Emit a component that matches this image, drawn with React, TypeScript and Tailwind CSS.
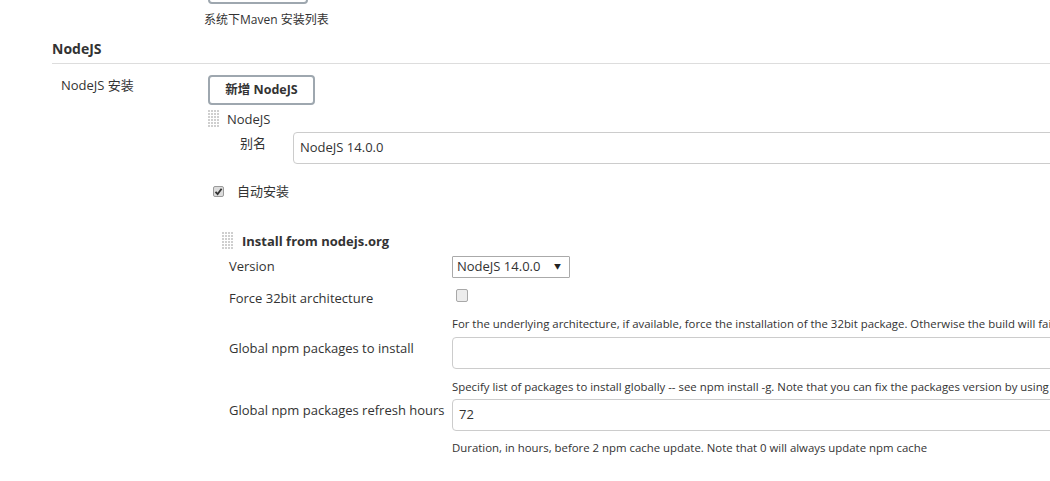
import React from 'react';

const FONT = "font-['Open_Sans','Noto_Sans_CJK_SC',sans-serif]";

function Handle() {
  const dots: React.ReactNode[] = [];
  for (let r = 0; r < 6; r++) {
    for (let c = 0; c < 4; c++) {
      dots.push(<rect key={`${r}-${c}`} x={c * 3} y={r * 3} width={2} height={2} fill="#cfcfcf" />);
    }
  }
  return (
    <svg width="11" height="18" viewBox="0 0 11 18" className="shrink-0">
      {dots}
    </svg>
  );
}

function Checkbox({ checked }: { checked?: boolean }) {
  return (
    <div
      className={
        checked
          ? 'w-[11px] h-[11px] rounded-[2px] border border-[#9a9a9a] bg-[#dcdcdc] flex items-center justify-center shrink-0'
          : 'w-[12px] h-[13px] rounded-[2px] border border-[#a8a8a8] bg-[#ececec] shrink-0'
      }
    >
      {checked && (
        <svg width="9" height="9" viewBox="0 0 9 9">
          <path d="M1.5 4.8 L3.6 7 L7.6 1.8" stroke="#333" strokeWidth="1.8" fill="none" />
        </svg>
      )}
    </div>
  );
}

function TextInput({ value, width }: { value?: string; width: string }) {
  return (
    <div className={`${width} h-[32px] border border-[#cccccc] rounded-[4px] px-[6px] flex items-center text-[13px] text-[#333] shrink-0`}>
      {value}
    </div>
  );
}

export default function App() {
  return (
    <div className={`w-[1050px] h-[481px] overflow-hidden bg-white text-[#333] ${FONT}`}>
      <div className="w-[1400px] pl-[52px]">
        {/* previous section remnant */}
        <div className="h-[4px] overflow-hidden flex flex-col justify-end pl-[156px]">
          <div className="w-[100px] h-[30px] border-2 border-[#9ea7af] rounded-[4px] shrink-0" />
        </div>
        <div className="mt-[8px] pl-[152px] text-[12px] leading-[16px]">系统下Maven 安装列表</div>

        {/* section heading */}
        <div className="mt-[11px] pb-[4px] border-b border-[#dddddd]">
          <h2 className="text-[14px] leading-[20px] font-bold">NodeJS</h2>
        </div>

        <div className="mt-[11px] flex">
          <div className="w-[156px] pl-[9px] text-[13px] leading-[20px]">NodeJS 安装</div>

          <div className="flex flex-col">
            <button className="w-[107px] h-[30px] border-2 border-[#9ea7af] rounded-[4px] text-[12.5px] font-bold text-[#333] bg-white">
              新增 NodeJS
            </button>

            <div className="mt-[5px] flex items-start">
              <Handle />
              <span className="ml-[8px] text-[13px] leading-[18px]">NodeJS</span>
            </div>

            <div className="mt-[4px] flex items-start">
              <div className="ml-[32px] w-[53px] pt-[2px] text-[13px] leading-[18px]">别名</div>
              <TextInput value="NodeJS 14.0.0" width="w-[800px]" />
            </div>

            <div className="mt-[17px] flex items-center h-[20px]">
              <div className="ml-[5px]">
                <Checkbox checked />
              </div>
              <span className="ml-[13px] text-[13px] leading-[20px]">自动安装</span>
            </div>

            <div className="mt-[31px] flex items-start pl-[14px]">
              <Handle />
              <span className="ml-[9px] text-[13px] leading-[18px] font-bold">Install from nodejs.org</span>
            </div>

            {/* nested installer fields */}
            <div className="pl-[21px] flex flex-col">
              <div className="mt-[6px] flex items-center h-[22px]">
                <div className="w-[223px] text-[13px]">Version</div>
                <div className="w-[118px] h-[22px] border border-[#aaaaaa] rounded-[1px] pl-[4px] pr-[8px] flex items-center justify-between text-[13px]">
                  <span>NodeJS 14.0.0</span>
                  <span className="text-[7px] text-[#222]">▼</span>
                </div>
              </div>

              <div className="mt-[11px] flex items-start h-[18px]">
                <div className="w-[223px] text-[13px] leading-[18px]">Force 32bit architecture</div>
                <div className="ml-[4px]">
                  <Checkbox />
                </div>
              </div>

              <div className="mt-[9px] pl-[223px] text-[11.4px] leading-[16px] whitespace-nowrap">
                For the underlying architecture, if available, force the installation of the 32bit package. Otherwise the build will fail
              </div>

              <div className="mt-[5px] flex items-start">
                <div className="w-[223px] pt-[2px] text-[13px] leading-[18px]">Global npm packages to install</div>
                <TextInput width="w-[700px]" />
              </div>

              <div className="mt-[10px] pl-[223px] text-[11.4px] leading-[16px] whitespace-nowrap">
                Specify list of packages to install globally -- see npm install -g. Note that you can fix the packages version by using
              </div>

              <div className="mt-[4px] flex items-start">
                <div className="w-[223px] pt-[2px] text-[13px] leading-[18px] whitespace-nowrap">Global npm packages refresh hours</div>
                <TextInput value="72" width="w-[700px]" />
              </div>

              <div className="mt-[9px] pl-[223px] text-[11.4px] leading-[16px] whitespace-nowrap">
                Duration, in hours, before 2 npm cache update. Note that 0 will always update npm cache
              </div>
            </div>
          </div>
        </div>
      </div>
    </div>
  );
}
